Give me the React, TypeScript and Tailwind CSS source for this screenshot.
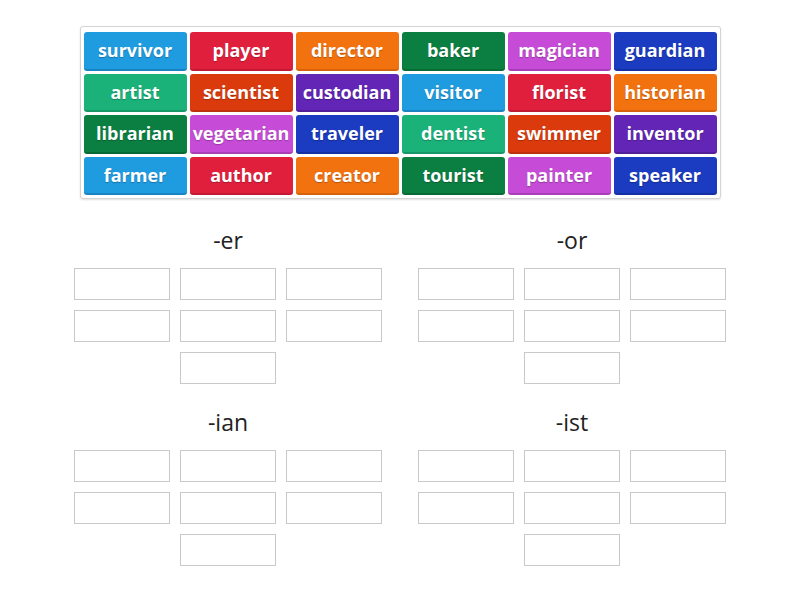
const tileColors: Record<string, string> = {
  blue: 'bg-[#1f9be0] border-b-[#1a84c2]',
  red: 'bg-[#e01f3d] border-b-[#c21a34]',
  orange: 'bg-[#f2720f] border-b-[#d6620a]',
  green: 'bg-[#0b7f41] border-b-[#086b36]',
  magenta: 'bg-[#c64bd6] border-b-[#a93eb8]',
  navy: 'bg-[#1b3bc0] border-b-[#1530a3]',
  teal: 'bg-[#1bb27a] border-b-[#169868]',
  rust: 'bg-[#db3b0c] border-b-[#bd320a]',
  purple: 'bg-[#6225b5] border-b-[#521e9a]',
};

const tiles: [string, keyof typeof tileColors][] = [
  ['survivor', 'blue'],
  ['player', 'red'],
  ['director', 'orange'],
  ['baker', 'green'],
  ['magician', 'magenta'],
  ['guardian', 'navy'],
  ['artist', 'teal'],
  ['scientist', 'rust'],
  ['custodian', 'purple'],
  ['visitor', 'blue'],
  ['florist', 'red'],
  ['historian', 'orange'],
  ['librarian', 'green'],
  ['vegetarian', 'magenta'],
  ['traveler', 'navy'],
  ['dentist', 'teal'],
  ['swimmer', 'rust'],
  ['inventor', 'purple'],
  ['farmer', 'blue'],
  ['author', 'red'],
  ['creator', 'orange'],
  ['tourist', 'green'],
  ['painter', 'magenta'],
  ['speaker', 'navy'],
];

function Group({ title }: { title: string }) {
  return (
    <div className="w-[308px]">
      <div className="h-[30px] text-center text-[23px] leading-[30px] text-[#222]">{title}</div>
      <div className="mt-[13px] grid grid-cols-[96px_96px_96px] gap-x-[10px] gap-y-[10px]">
        {Array.from({ length: 6 }).map((_, i) => (
          <div key={i} className="h-[32px] border border-[#c9c9c9] bg-white" />
        ))}
        <div className="col-start-2 h-[32px] border border-[#c9c9c9] bg-white" />
      </div>
    </div>
  );
}

export default function App() {
  return (
    <div className="min-h-[600px] w-[800px] bg-white pt-[26px] font-['Open_Sans',sans-serif]">
      {/* Word bank */}
      <div className="mx-auto w-[641px] rounded-[3px] border border-[#d4d4d4] bg-white px-[3px] pt-[5px] pb-[3px] shadow-[0_1px_2px_rgba(0,0,0,0.12)]">
        <div className="grid grid-cols-6 gap-x-[3px] gap-y-[3px]">
          {tiles.map(([word, color]) => (
            <div
              key={word}
              className={`flex h-[38.5px] items-center justify-center rounded-[3px] border-b-2 text-[18px] font-bold leading-none text-white [text-shadow:0_1px_1px_rgba(0,0,0,0.25)] ${tileColors[color]}`}
            >
              {word}
            </div>
          ))}
        </div>
      </div>

      {/* Sorting groups */}
      <div className="mx-auto mt-[26px] grid w-[652px] grid-cols-[308px_308px] gap-x-[36px] gap-y-[23px]">
        <Group title="-er" />
        <Group title="-or" />
        <Group title="-ian" />
        <Group title="-ist" />
      </div>
    </div>
  );
}
